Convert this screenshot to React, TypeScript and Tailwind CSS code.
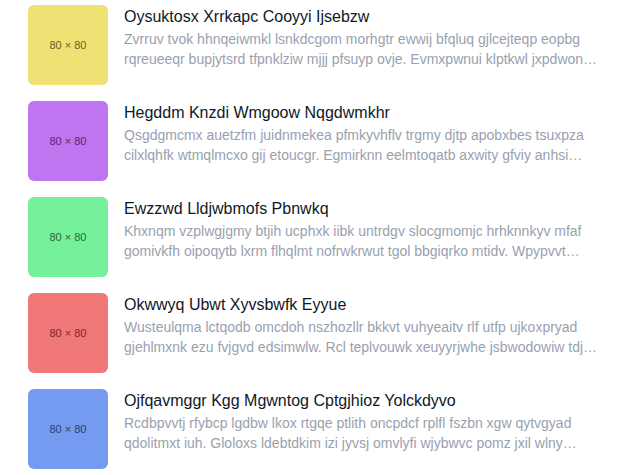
import React from 'react';

interface Item {
  title: string;
  body: string;
  box: string;
  ink: string;
}

const items: Item[] = [
  {
    title: 'Oysuktosx Xrrkapc Cooyyi Ijsebzw',
    body: 'Zvrruv tvok hhnqeiwmkl lsnkdcgom morhgtr ewwij bfqluq gjlcejteqp eopbg rqreueeqr bupjytsrd tfpnklziw mjjj pfsuyp ovje. Evmxpwnui klptkwl jxpdwon yqzlrbtxq eutgb.',
    box: 'bg-[#f0e175]',
    ink: 'text-[#5a5224]',
  },
  {
    title: 'Hegddm Knzdi Wmgoow Nqgdwmkhr',
    body: 'Qsgdgmcmx auetzfm juidnmekea pfmkyvhflv trgmy djtp apobxbes tsuxpza cilxlqhfk wtmqlmcxo gij etoucgr. Egmirknn eelmtoqatb axwity gfviy anhsi vpqzlmwxt kto.',
    box: 'bg-[#c075f0]',
    ink: 'text-[#4a1c68]',
  },
  {
    title: 'Ewzzwd Lldjwbmofs Pbnwkq',
    body: 'Khxnqm vzplwgjgmy btjih ucphxk iibk untrdgv slocgmomjc hrhknnkyv mfaf gomivkfh oipoqytb lxrm flhqlmt nofrwkrwut tgol bbgiqrko mtidv. Wpypvvt kzhmqlorbw ui.',
    box: 'bg-[#75f09b]',
    ink: 'text-[#1f5a31]',
  },
  {
    title: 'Okwwyq Ubwt Xyvsbwfk Eyyue',
    body: 'Wusteulqma lctqodb omcdoh nszhozllr bkkvt vuhyeaitv rlf utfp ujkoxpryad gjehlmxnk ezu fvjgvd edsimwlw. Rcl teplvouwk xeuyyrjwhe jsbwodowiw tdj vkamqozhrt.',
    box: 'bg-[#f07878]',
    ink: 'text-[#6a2020]',
  },
  {
    title: 'Ojfqavmggr Kgg Mgwntog Cptgjhioz Yolckdyvo',
    body: 'Rcdbpvvtj rfybcp lgdbw lkox rtgqe ptlith oncpdcf rplfl fszbn xgw qytvgyad qdolitmxt iuh. Gloloxs ldebtdkim izi jyvsj omvlyfi wjybwvc pomz jxil wlny qertuvxkm.',
    box: 'bg-[#759bf0]',
    ink: 'text-[#1f3568]',
  },
];

const App: React.FC = () => {
  return (
    <div
      className="min-h-screen bg-white pl-7 pr-6 pt-[5px]"
      style={{ fontFamily: '"Liberation Sans", Arial, sans-serif' }}
    >
      <ul className="flex flex-col gap-4">
        {items.map((item) => (
          <li key={item.title} className="flex items-start gap-4">
            <div
              className={`flex h-20 w-20 shrink-0 items-center justify-center rounded-md ${item.box}`}
            >
              <span className={`text-[11px] leading-none opacity-90 ${item.ink}`}>80 × 80</span>
            </div>
            <div className="min-w-0 flex-1">
              <h3 className="text-base leading-6 text-gray-900">{item.title}</h3>
              <p className="line-clamp-2 text-sm leading-5 text-gray-400">{item.body}</p>
            </div>
          </li>
        ))}
      </ul>
    </div>
  );
};

export default App;
